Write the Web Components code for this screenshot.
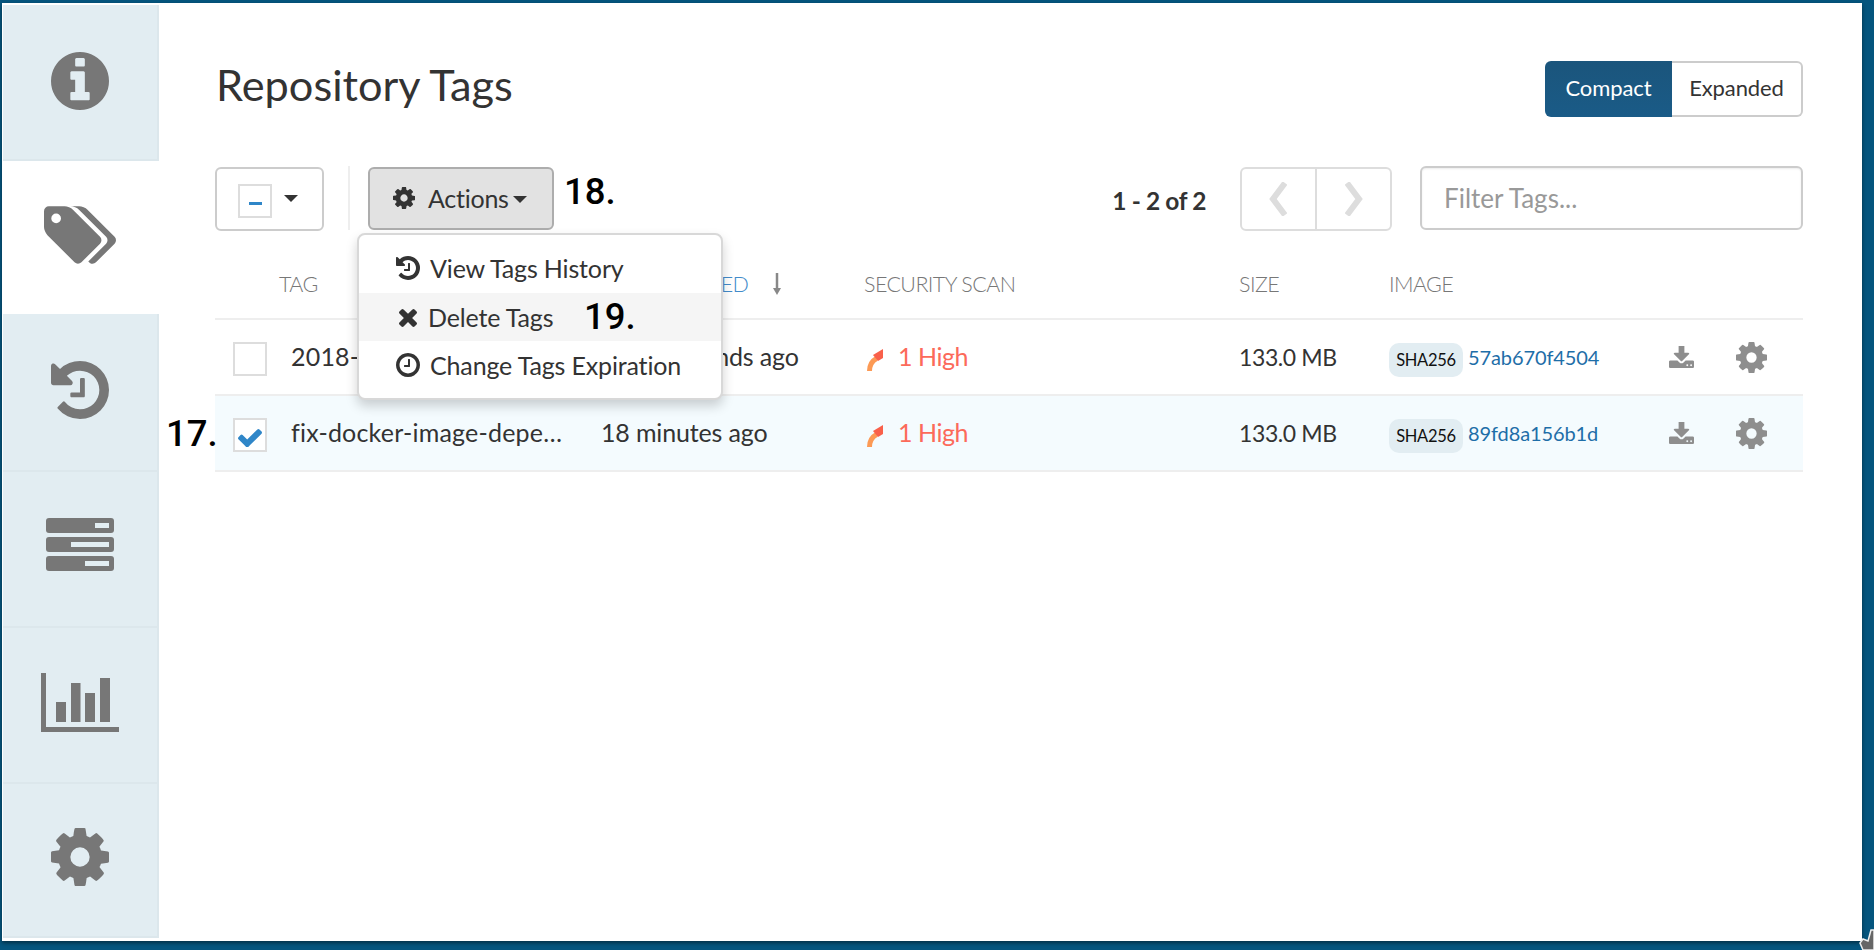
<!DOCTYPE html>
<html>
<head>
<meta charset="utf-8">
<title>Repository Tags</title>
<style>
  html, body { margin: 0; height: 100%; overflow: hidden; }
  body { background: #05557e; font-family: "Lato", "Open Sans", sans-serif; color: #333; }
</style>
</head>
<body>
<quay-frame>
  <side-tabs slot="side">
    <side-tab icon="info" w="58" h="58" style="flex: 0 0 156px"></side-tab>
    <side-tab icon="tags" w="72" h="58" active style="flex: 0 0 153px"></side-tab>
    <side-tab icon="history" w="58" h="58" style="flex: 0 0 158px; padding-bottom: 5px"></side-tab>
    <side-tab icon="server" w="68" h="53" style="flex: 0 0 156px; padding-bottom: 9px"></side-tab>
    <side-tab icon="chart" w="78" h="59" style="flex: 0 0 156px; padding-bottom: 6px"></side-tab>
    <side-tab icon="cog" w="58" h="58" style="flex: 0 0 154px; padding-bottom: 6px"></side-tab>
  </side-tabs>
  <tags-panel>
    <tags-toolbar></tags-toolbar>
    <tags-table>
      <tag-row time="a few seconds ago" hash="57ab670f4504">2018-05-03-release</tag-row>
      <tag-row time="18 minutes ago" hash="89fd8a156b1d" selected>fix-docker-image-depe…</tag-row>
    </tags-table>
  </tags-panel>
</quay-frame>

<script>
const ICONS = {
  cog: ['128 128 1536 1536', 'M1152 896q0-106-75-181t-181-75-181 75-75 181 75 181 181 75 181-75 75-181zm512-109v222q0 12-8 23t-20 13l-185 28q-19 54-39 91 35 50 107 138 10 12 10 25t-9 23q-27 37-99 108t-94 71q-12 0-26-9l-138-108q-44 23-91 38-16 136-29 186-7 28-36 28h-222q-14 0-24.500-8.500t-11.500-21.500l-28-184q-49-16-90-37l-141 107q-10 9-25 9-14 0-25-11-126-114-165-168-7-10-7-23 0-12 8-23 15-21 51-66.500t54-70.500q-27-50-41-99l-183-27q-13-2-21-12.500t-8-23.500v-222q0-12 8-23t19-13l186-28q14-46 39-92-40-57-107-138-10-12-10-24 0-10 9-23 26-36 98.500-107.500t94.500-71.500q13 0 26 10l138 107q44-23 91-38 16-136 29-186 7-28 36-28h222q14 0 24.500 8.500t11.500 21.500l28 184q49 16 90 37l142-107q9-9 24-9 13 0 25 10 129 119 165 170 7 8 7 22 0 12-8 23-15 21-51 66.500t-54 70.500q26 50 41 98l183 28q13 2 21 12.500t8 23.500z'],
  info: ['128 128 1536 1536', 'M1152 1376v-160q0-14-9-23t-23-9h-96v-512q0-14-9-23t-23-9h-320q-14 0-23 9t-9 23v160q0 14 9 23t23 9h96v320h-96q-14 0-23 9t-9 23v160q0 14 9 23t23 9h448q14 0 23-9t9-23zm-128-896v-160q0-14-9-23t-23-9h-192q-14 0-23 9t-9 23v160q0 14 9 23t23 9h192q14 0 23-9t9-23zm640 416q0 209-103 385.500t-279.500 279.500-385.500 103-385.500-103-279.500-279.500-103-385.500 103-385.500 279.500-279.500 385.500-103 385.500 103 279.500 279.500 103 385.500z'],
  history: ['128 128 1536 1536', 'M1664 896q0 156-61 298t-164 245-245 164-298 61q-172 0-327-72.500t-264-204.500q-7-10-6.500-22.500t8.500-20.500l137-138q10-9 25-9 16 2 23 12 73 95 179 147t225 52q104 0 198.500-40.500t163.500-109.500 109.500-163.500 40.500-198.500-40.500-198.500-109.500-163.500-163.500-109.500-198.500-40.500q-98 0-188 35.500t-160 101.500l137 138q31 30 14 69-17 40-59 40h-448q-26 0-45-19t-19-45v-448q0-42 40-59 39-17 69 14l130 129q107-101 244.500-156.500t284.500-55.500q156 0 298 61t245 164 164 245 61 298zm-640-288v448q0 14-9 23t-23 9h-320q-14 0-23-9t-9-23v-64q0-14 9-23t23-9h224v-352q0-14 9-23t23-9h64q14 0 23 9t9 23z'],
  tags: ['0 128 1899 1515', 'M448 448q0-53-37.500-90.500t-90.500-37.500-90.500 37.500-37.500 90.500 37.500 90.500 90.500 37.500 90.500-37.500 37.500-90.500zm1067 576q0 53-37 90l-491 492q-39 37-91 37-53 0-90-37l-715-716q-38-37-64.500-101t-26.500-117v-416q0-52 38-90t90-38h416q53 0 117 26.500t102 64.500l715 714q37 39 37 91zm384 0q0 53-37 90l-491 492q-39 37-91 37-36 0-59-14t-53-45l470-470q37-37 37-90 0-52-37-91l-715-714q-38-38-102-64.500t-117-26.500h224q53 0 117 26.500t102 64.500l715 714q37 39 37 91z'],
  clock: ['128 128 1536 1536', 'M1024 544v448q0 14-9 23t-23 9h-320q-14 0-23-9t-9-23v-64q0-14 9-23t23-9h224v-352q0-14 9-23t23-9h64q14 0 23 9t9 23zm416 352q0-148-73-273t-198-198-273-73-273 73-198 198-73 273 73 273 198 198 273 73 273-73 198-198 73-273zm224 0q0 209-103 385.500t-279.500 279.500-385.500 103-385.500-103-279.500-279.500-103-385.500 103-385.500 279.500-279.500 385.500-103 385.500 103 279.500 279.500 103 385.500z'],
  times: ['302 238 1188 1316', 'M1490 1322q0 40-28 68l-136 136q-28 28-68 28t-68-28l-294-294-294 294q-28 28-68 28t-68-28l-136-136q-28-28-28-68t28-68l294-294-294-294q-28-28-28-68t28-68l136-136q28-28 68-28t68 28l294 294 294-294q28-28 68-28t68 28l136 136q28 28 28 68t-28 68l-294 294 294 294q28 28 28 68z'],
  check: ['121 270 1550 1224', 'M1671 566q0 40-28 68l-724 724-136 136q-28 28-68 28t-68-28l-136-136-362-362q-28-28-28-68t28-68l136-136q28-28 68-28t68 28l294 295 656-657q28-28 68-28t68 28l136 136q28 28 28 68z'],
  download: ['64 128 1664 1408', 'M1344 1344q0-26-19-45t-45-19-45 19-19 45 19 45 45 19 45-19 19-45zm256 0q0-26-19-45t-45-19-45 19-19 45 19 45 45 19 45-19 19-45zm128-224v320q0 40-28 68t-68 28h-1472q-40 0-68-28t-28-68v-320q0-40 28-68t68-28h465l135 136q58 56 136 56t136-56l136-136h464q40 0 68 28t28 68zm-325-569q17 41-14 70l-448 448q-18 19-45 19t-45-19l-448-448q-31-29-14-70 17-39 59-39h256v-448q0-26 19-45t45-19h256q26 0 45 19t19 45v448h256q42 0 59 39z']
};

class FaIcon extends HTMLElement {
  connectedCallback() {
    const [box, d] = ICONS[this.getAttribute('name')];
    const w = this.getAttribute('w');
    const h = this.getAttribute('h') || w;
    this.attachShadow({ mode: 'open' }).innerHTML = `
      <style>
        :host { display: inline-flex; flex: none; }
        svg { display: block; fill: currentColor; }
      </style>
      <svg width="${w}" height="${h}" viewBox="${box}"><path d="${d}"/></svg>`;
  }
}
customElements.define('fa-icon', FaIcon);

class QuayFrame extends HTMLElement {
  constructor() {
    super();
    this.attachShadow({ mode: 'open' }).innerHTML = `
      <style>
        :host { display: block; position: relative; width: 1874px; height: 950px; overflow: hidden; padding: 3px 0 0 2px; box-sizing: border-box; }
        .panel { display: flex; width: 1860px; height: 938px; background: #fff; box-shadow: 0 2px 4px rgba(0, 0, 0, .45); }
        .cursor { position: absolute; left: 1859px; top: 929px; }
      </style>
      <div class="panel">
        <slot name="side"></slot>
        <slot></slot>
      </div>
      <svg class="cursor" width="15" height="21" viewBox="0 0 15 21">
        <path d="M12 1 L9 12 L4 10 L1 14 L4 21 L15 21 L15 1 Z" fill="#666" stroke="#eee" stroke-width="1.500"/>
      </svg>`;
  }
}
customElements.define('quay-frame', QuayFrame);

class SideTabs extends HTMLElement {
  constructor() {
    super();
    this.attachShadow({ mode: 'open' }).innerHTML = `
      <style>
        :host { display: flex; flex-direction: column; flex: none; width: 156px; padding: 2px 0 3px 1px; box-sizing: content-box; }
      </style>
      <slot></slot>`;
  }
}
customElements.define('side-tabs', SideTabs);

class SideTab extends HTMLElement {
  connectedCallback() {
    const name = this.getAttribute('icon');
    const w = this.getAttribute('w');
    const h = this.getAttribute('h');
    let icon = `<fa-icon name="${name}" w="${w}" h="${h}"></fa-icon>`;
    if (name === 'server') {
      icon = `<svg width="68" height="53" viewBox="0 0 68 53">
        <rect width="68" height="15" rx="3" fill="#777"/><rect x="49" y="5" width="14" height="5" fill="#e2edf2"/>
        <rect y="19" width="68" height="15" rx="3" fill="#777"/><rect x="25" y="24" width="38" height="5" fill="#e2edf2"/>
        <rect y="38" width="68" height="15" rx="3" fill="#777"/><rect x="39" y="43" width="24" height="5" fill="#e2edf2"/>
      </svg>`;
    }
    if (name === 'chart') {
      icon = `<svg width="78" height="59" viewBox="0 0 78 59" fill="#777">
        <rect width="5" height="59"/><rect y="54" width="78" height="5"/>
        <rect x="15" y="29" width="10" height="20"/><rect x="30" y="10" width="9.500" height="39"/>
        <rect x="44" y="20" width="10" height="29"/><rect x="59" y="5" width="10" height="44"/>
      </svg>`;
    }
    this.attachShadow({ mode: 'open' }).innerHTML = `
      <style>
        :host { display: flex; align-items: center; justify-content: center; padding-bottom: 3px; color: #777; background: #e2edf2; box-sizing: border-box; border-right: 2px solid #dce7ec; border-bottom: 2px solid #dce7ec; }
        :host([active]) { background: #fff; border-color: #fff; }
      </style>
      ${icon}`;
  }
}
customElements.define('side-tab', SideTab);

class TagsPanel extends HTMLElement {
  constructor() {
    super();
    this.attachShadow({ mode: 'open' }).innerHTML = `
      <style>
        :host { display: block; flex: 1; position: relative; padding: 58px 59px 0 56px; min-width: 0; }
        header { display: flex; align-items: center; justify-content: space-between; height: 56px; margin-bottom: 49px; }
        h2 { margin: 0 0 10px 1px; font-size: 43.300px; font-weight: 400; color: #333; letter-spacing: 0; }
        .toggle { display: flex; height: 56px; font-size: 22px; letter-spacing: -.1px; }
        .toggle span { display: flex; align-items: center; justify-content: center; box-sizing: border-box; padding-bottom: 3px; }
        .on { width: 127px; background: linear-gradient(#1b557c, #1a5b87); color: #fff; border-radius: 6px 0 0 6px; }
        .off { width: 131px; border: 2px solid #ccc; border-left: 0; border-radius: 0 6px 6px 0; color: #333; }
        .mark { position: absolute; font: 500 36.500px/1 "Roboto", sans-serif; color: #000; z-index: 5; }
      </style>
      <header>
        <h2>Repository Tags</h2>
        <div class="toggle"><span class="on">Compact</span><span class="off">Expanded</span></div>
      </header>
      <slot></slot>
      <span class="mark" style="left: 7px; top: 413px">17.</span>
      <span class="mark" style="left: 405px; top: 171px">18.</span>
      <span class="mark" style="left: 425px; top: 296px">19.</span>`;
  }
}
customElements.define('tags-panel', TagsPanel);

class TagsToolbar extends HTMLElement {
  constructor() {
    super();
    this.attachShadow({ mode: 'open' }).innerHTML = `
      <style>
        :host { display: flex; align-items: flex-start; position: relative; z-index: 2; height: 65px; }
        .box { box-sizing: border-box; border: 2px solid #ccc; border-radius: 6px; }
        .select { display: flex; align-items: center; width: 109px; height: 64px; margin-top: 1px; padding-left: 21px; }
        .minus { display: flex; align-items: center; justify-content: center; box-sizing: border-box; width: 34px; height: 34px; border: 2px solid #ddd; margin-top: 3px; }
        .minus i { display: block; width: 13px; height: 3px; margin-top: 5px; background: #2f86c8; }
        .caret { border-top: 7px solid #333; border-left: 7px solid transparent; border-right: 7px solid transparent; }
        .select .caret { margin-left: 12px; margin-top: -2px; }
        .rule { width: 2px; height: 64px; margin: 0 18px 0 24px; background: #eee; }
        .actions { display: flex; align-items: center; width: 186px; height: 63px; margin-top: 1px; padding-left: 23px; padding-bottom: 1px; background: #e2e2e2; border-color: #adadad; font-size: 25px; letter-spacing: -.25px; color: #333; }
        .actions fa-icon { margin-right: 13px; }
        .actions .caret { margin-left: 4px; margin-top: 2px; }
        .count { margin-left: auto; margin-right: 34px; margin-top: 20px; font-size: 24.500px; font-weight: 700; letter-spacing: -.4px; color: #333; }
        .pager { display: flex; width: 152px; height: 64px; margin-top: 1px; margin-right: 28px; border-color: #ddd; }
        .pager span { flex: 1; display: flex; align-items: center; justify-content: center; }
        .pager span:first-child svg { margin-right: 4px; }
        .pager span + span svg { margin-left: 3px; }
        .pager span + span { border-left: 2px solid #ddd; }
        input { display: block; width: 383px; height: 64px; box-sizing: border-box; padding: 0 22px; font: 26px "Lato", sans-serif; letter-spacing: 0; color: #333; box-shadow: inset 0 1px 2px rgba(0, 0, 0, .08); outline: none; }
        input::placeholder { color: #999; opacity: 1; }
        .menu { position: absolute; left: 142px; top: 67px; width: 366px; box-sizing: border-box; height: 167px; padding: 10px 0 9px; background: #fff; border: 2px solid #d8d8d8; border-radius: 8px; box-shadow: 0 6px 12px rgba(0, 0, 0, .18); font-size: 25px; letter-spacing: -.15px; color: #333; }
        .menu div { display: flex; align-items: center; height: 48px; padding-left: 37px; }
        .menu div:first-child { box-sizing: border-box; padding-bottom: 2px; }
        .menu .hover { background: #f5f5f5; }
        .menu fa-icon { color: #333; width: 24px; justify-content: center; margin-right: 10px; }
        .menu .hover fa-icon { margin-right: 8px; }
      </style>
      <div class="box select"><span class="minus"><i></i></span><span class="caret"></span></div>
      <div class="rule"></div>
      <div class="box actions"><fa-icon name="cog" w="22"></fa-icon>Actions<span class="caret"></span></div>
      <div class="count">1 - 2 of 2</div>
      <div class="box pager">
        <span><svg width="20" height="34" viewBox="0 0 20 34"><path d="M18 1 L6 17 L18 33" fill="none" stroke="#ddd" stroke-width="6"/></svg></span>
        <span><svg width="20" height="34" viewBox="0 0 20 34"><path d="M2 1 L14 17 L2 33" fill="none" stroke="#ddd" stroke-width="6"/></svg></span>
      </div>
      <input class="box" placeholder="Filter Tags...">
      <div class="menu">
        <div><fa-icon name="history" w="24"></fa-icon>View Tags History</div>
        <div class="hover"><fa-icon name="times" w="18" h="20"></fa-icon>Delete Tags</div>
        <div><fa-icon name="clock" w="24"></fa-icon>Change Tags Expiration</div>
      </div>`;
  }
}
customElements.define('tags-toolbar', TagsToolbar);

const COLUMNS = '76px 312px 261px 375px 150px 280px 67px 1fr';

class TagsTable extends HTMLElement {
  constructor() {
    super();
    this.attachShadow({ mode: 'open' }).innerHTML = `
      <style>
        :host { display: block; }
        .head { display: grid; grid-template-columns: ${COLUMNS}; align-items: center; box-sizing: border-box; height: 89px; padding-top: 18px; border-bottom: 2px solid #eee; font-size: 21.500px; font-weight: 300; letter-spacing: -.6px; color: #777; }
        .head span:first-child { grid-column: 2; margin-left: -12px; }
        .sorted { color: #428bca; display: flex; align-items: center; margin-left: -6px; }
        .sorted svg { margin-left: 24px; }
      </style>
      <div class="head">
        <span>TAG</span>
        <span class="sorted">LAST MODIFIED<svg width="10" height="22" viewBox="0 0 10 22"><path d="M5 0 V18" stroke="#888" stroke-width="2.500"/><path d="M1 15 H9 L5 22 Z" fill="#888"/></svg></span>
        <span>SECURITY SCAN</span>
        <span>SIZE</span>
        <span>IMAGE</span>
      </div>
      <slot></slot>`;
  }
}
customElements.define('tags-table', TagsTable);

class TagRow extends HTMLElement {
  connectedCallback() {
    const check = this.hasAttribute('selected')
      ? '<fa-icon name="check" w="24" h="19"></fa-icon>' : '';
    this.attachShadow({ mode: 'open' }).innerHTML = `
      <style>
        :host { display: grid; grid-template-columns: ${COLUMNS}; align-items: center; height: 76px; box-sizing: border-box; border-bottom: 2px solid #eee; font-size: 25px; letter-spacing: -.15px; color: #333; }
        :host([selected]) { background: #f4fbfe; }
        .cb { display: flex; align-items: center; justify-content: center; box-sizing: border-box; width: 34px; height: 34px; margin: 3px 0 0 18px; background: #fff; border: 2px solid #ddd; color: #2f86c8; }
        .cb fa-icon { margin-top: 6px; }
        .name { white-space: nowrap; overflow: hidden; letter-spacing: .2px; margin-top: -2px; }
        .time { margin: -2px 0 0 -2px; white-space: nowrap; }
        .scan { display: flex; align-items: center; margin-top: -2px; padding-left: 3px; color: #fc6a5a; letter-spacing: -.45px; }
        .scan svg { margin-right: 14px; margin-top: 7px; }
        .size { font-size: 23px; letter-spacing: -.4px; }
        .image { display: flex; align-items: center; letter-spacing: 0; }
        .sha { display: flex; align-items: center; justify-content: center; width: 74px; height: 34px; margin-top: 5px; margin-right: 5px; background: #e2edf2; border-radius: 10px; font-size: 16.500px; letter-spacing: -.3px; color: #111; }
        .hash { font-size: 20px; letter-spacing: -.1px; color: #1e6ea8; }
        .tools { display: flex; align-items: center; color: #8e8e8e; }
        fa-icon.dl { margin-right: 42px; }
      </style>
      <div class="cb">${check}</div>
      <div class="name"><slot></slot></div>
      <div class="time">${this.getAttribute('time')}</div>
      <div class="scan">
        <svg width="17" height="22" viewBox="0 0 17 22">
          <path d="M2.500 22 C2.500 16 5 12 9.500 9.500" fill="none" stroke="#fc9a55" stroke-width="5"/>
          <path d="M6 6 L16 0 V9 L11 12 Z" fill="#f9604a"/>
        </svg>1 High</div>
      <div class="size">133.0 MB</div>
      <div class="image"><span class="sha">SHA256</span><span class="hash">${this.getAttribute('hash')}</span></div>
      <div class="tools"><fa-icon class="dl" name="download" w="25" h="23"></fa-icon><fa-icon name="cog" w="31"></fa-icon></div>`;
  }
}
customElements.define('tag-row', TagRow);
</script>
</body>
</html>
